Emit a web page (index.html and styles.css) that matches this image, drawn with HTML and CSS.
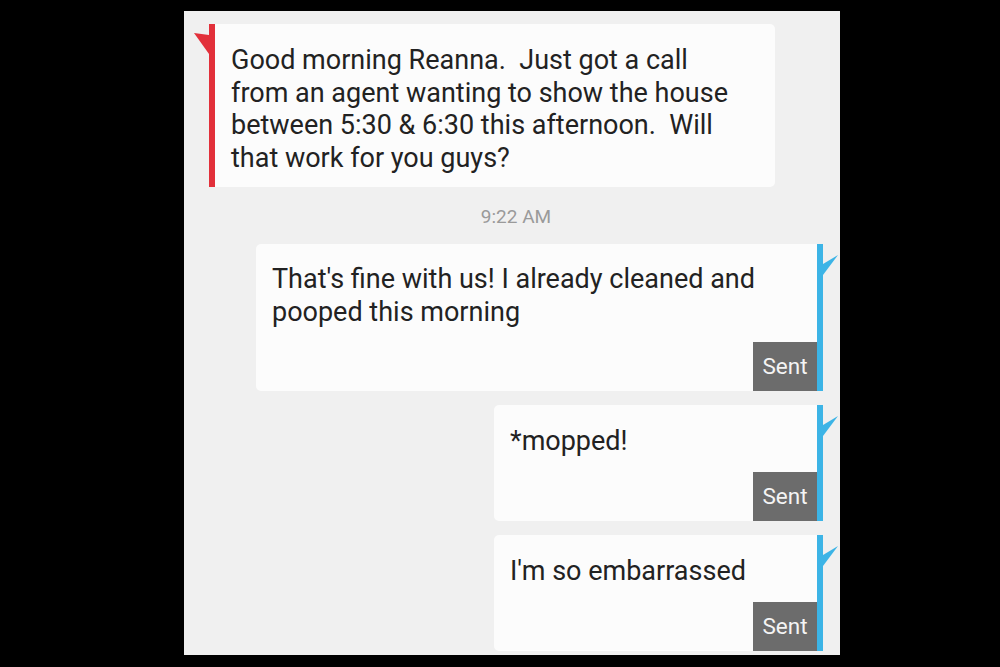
FILE: index.html
```html
<!DOCTYPE html>
<html lang="en">
<head>
<meta charset="utf-8">
<title>Messages</title>
<link rel="stylesheet" href="styles.css">
</head>
<body>
<!-- ===== チャット画面 ===== -->
<main class="chat">
  <div class="msg msg-in">
    <p>Good morning Reanna.&nbsp; Just got a call from an agent wanting to show the house between 5:30 &amp; 6:30 this afternoon.&nbsp; Will that work for you guys?</p>
  </div>

  <div class="stamp">9:22 AM</div>

  <div class="msg msg-out wide">
    <p>That's fine with us! I already cleaned and pooped this morning</p>
    <span class="sent">Sent</span>
  </div>

  <div class="msg msg-out">
    <p>*mopped!</p>
    <span class="sent">Sent</span>
  </div>

  <div class="msg msg-out">
    <p>I'm so embarrassed</p>
    <span class="sent">Sent</span>
  </div>
</main>
</body>
</html>
```

FILE: styles.css
```css
/* ==== リセット ==== */
*,*::before,*::after{box-sizing:border-box;margin:0;padding:0}
html,body{width:100%;height:100%;background:#000;overflow:hidden}
body{padding-top:11px;font-family:Roboto,"Liberation Sans",sans-serif}

/* ==== パネル ==== */
.chat{
  width:656px;height:644px;margin-left:184px;
  background:#f0f0f0;
  padding:13px 17px 0 25px;
  display:flex;flex-direction:column;
}

/* ==== 吹き出し ==== */
.msg{
  position:relative;
  background:#fcfcfc;
  display:flex;flex-direction:column;
  color:#222;
  font-size:27px;line-height:32.5px;
}
.msg p{padding:0 16px}

/* 受信 */
.msg-in{
  width:566px;height:163px;
  border-left:6px solid #e2303a;
  border-radius:0 5px 5px 0;
  padding-top:20px;
}
.msg-in p{padding-right:30px}
.msg-in::before{
  content:"";position:absolute;left:-21px;top:9px;
  width:15px;height:21px;background:#e2303a;
  clip-path:polygon(0 0,100% 10%,100% 100%);
}

/* 送信 */
.msg-out{
  align-self:flex-end;
  width:329px;height:116px;
  border-right:6px solid #3cb4e6;
  border-radius:5px 0 0 5px;
  padding-top:20px;
  margin-top:14px;
}
.msg-out.wide{width:567px;height:147px;padding-top:19px;margin-top:0}
.msg-out::after{
  content:"";position:absolute;right:-21px;top:11px;
  width:15px;height:20px;background:#3cb4e6;
  clip-path:polygon(0 45%,100% 0,0 100%);
}

.sent{
  margin-top:auto;align-self:flex-end;
  width:64px;height:49px;
  background:#6c6c6c;color:#f4f4f4;
  font-size:22.5px;line-height:49px;text-align:center;
}

/* ==== 時刻 ==== */
.stamp{
  text-align:center;color:#9a9a9a;
  font-size:19px;line-height:20px;
  margin:20px 0 17px;
}
```
